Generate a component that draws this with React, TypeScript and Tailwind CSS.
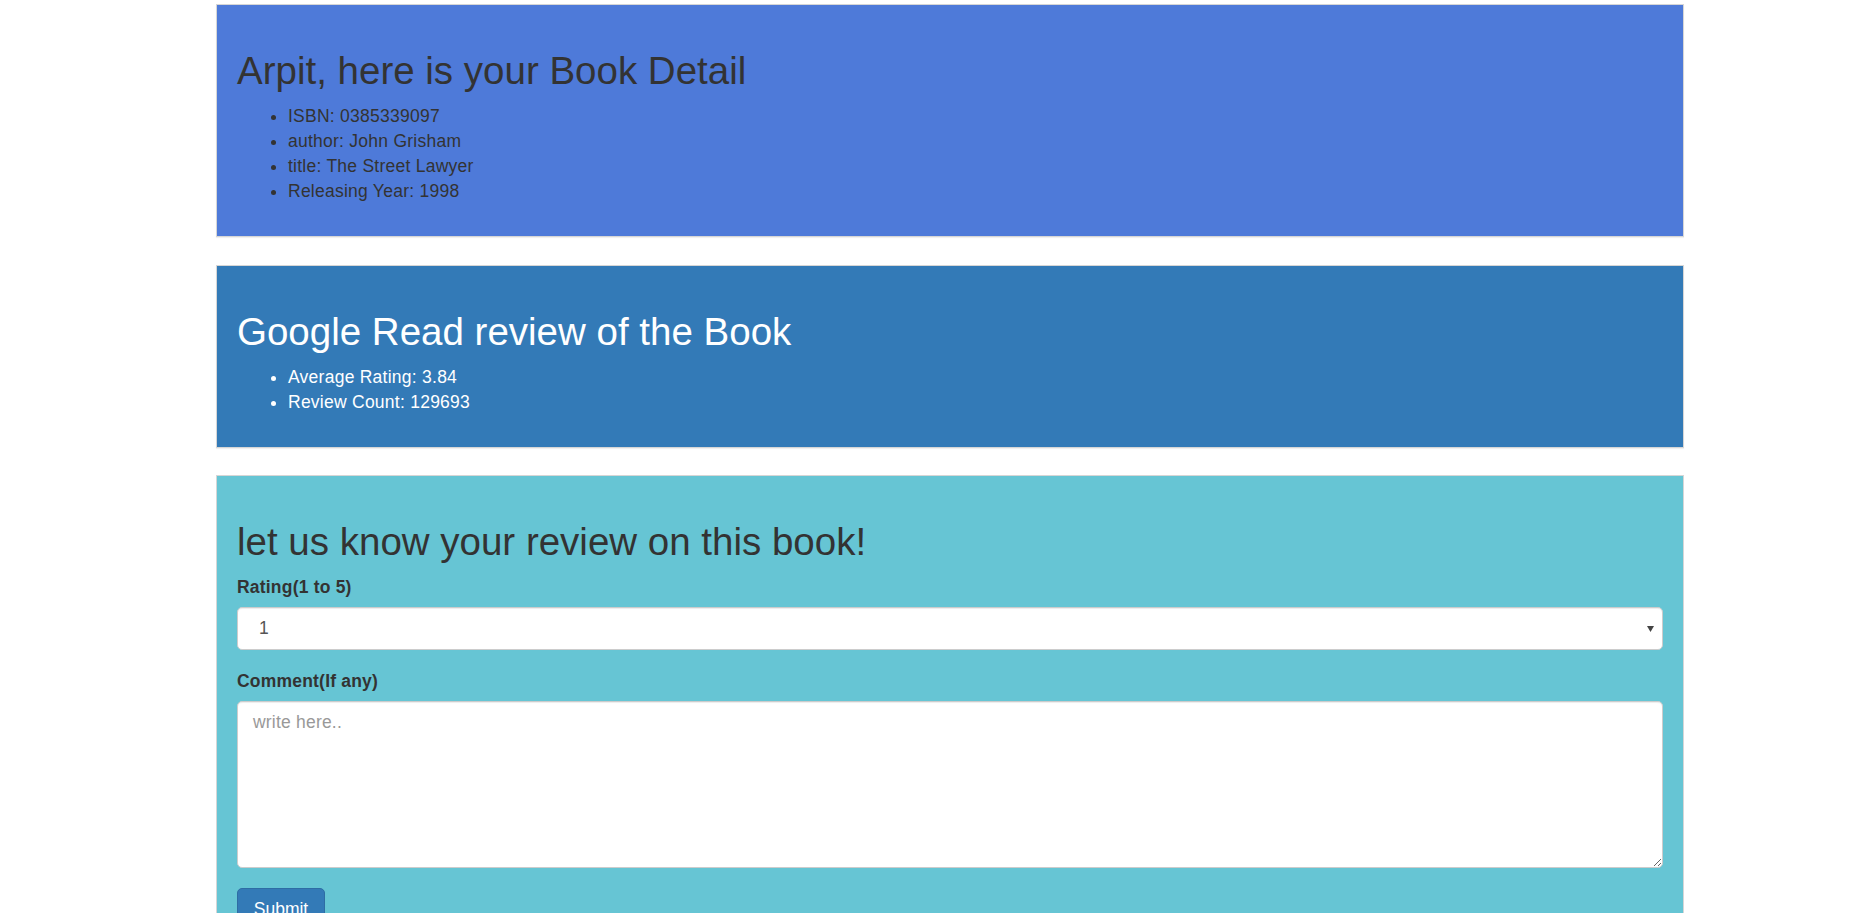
import { useState } from "react";

const bookDetails = [
  "ISBN: 0385339097",
  "author: John Grisham",
  "title: The Street Lawyer",
  "Releasing Year: 1998",
];

const googleReview = ["Average Rating: 3.84", "Review Count: 129693"];

export default function App() {
  const [rating, setRating] = useState("1");
  const [comment, setComment] = useState("");

  return (
    <div className="h-[913px] overflow-hidden bg-white font-['Liberation_Sans',Arial,sans-serif] text-[#333]">
      <div className="ml-[216px] w-[1468px] pt-[4px] flex flex-col gap-[28px]">
        {/* book detail */}
        <section className="border border-[#d6d6d6] bg-[#4e7ad9] px-[20px] pt-[45px] pb-[32px] shadow-[0_1px_1px_rgba(0,0,0,0.06)]">
          <h2 className="text-[38.5px] leading-[42px] mb-[12px]">Arpit, here is your Book Detail</h2>
          <ul className="list-disc pl-[51px] text-[17.5px] leading-[25px] tracking-[0.25px]">
            {bookDetails.map((item) => (
              <li key={item}>{item}</li>
            ))}
          </ul>
        </section>

        {/* google review */}
        <section className="border border-[#d6d6d6] bg-[#337ab7] text-white px-[20px] pt-[45px] pb-[32px] shadow-[0_1px_1px_rgba(0,0,0,0.06)]">
          <h2 className="text-[38.5px] leading-[42px] mb-[12px]">Google Read review of the Book</h2>
          <ul className="list-disc pl-[51px] text-[17.5px] leading-[25px] tracking-[0.25px]">
            {googleReview.map((item) => (
              <li key={item}>{item}</li>
            ))}
          </ul>
        </section>

        {/* review form */}
        <section className="-mt-[1px] border border-[#d6d6d6] bg-[#66c5d4] px-[20px] pt-[45px] pb-[40px]">
          <h2 className="text-[38.5px] leading-[42px] mb-[12px]">let us know your review on this book!</h2>
          <form onSubmit={(e) => e.preventDefault()}>
            <div className="mb-[19px]">
              <label className="block font-bold text-[17.5px] leading-[25px] tracking-[0.2px] mb-[7px]">
                Rating(1 to 5)
              </label>
              <div className="relative">
                <select
                  value={rating}
                  onChange={(e) => setRating(e.target.value)}
                  className="block w-full h-[43px] appearance-none bg-white border border-[#ccc] rounded-[5px] pl-[21px] pr-[30px] text-[17.5px] text-[#555] shadow-[inset_0_1px_1px_rgba(0,0,0,0.075)] outline-none"
                >
                  {["1", "2", "3", "4", "5"].map((v) => (
                    <option key={v} value={v}>
                      {v}
                    </option>
                  ))}
                </select>
                <svg
                  className="absolute right-[9px] top-[19px] pointer-events-none"
                  width="7"
                  height="6"
                  viewBox="0 0 7 6"
                >
                  <path d="M0 0h7L3.5 6z" fill="#444" />
                </svg>
              </div>
            </div>

            <div className="mb-[20px]">
              <label className="block font-bold text-[17.5px] leading-[25px] tracking-[0.2px] mb-[7px]">
                Comment(If any)
              </label>
              <textarea
                value={comment}
                onChange={(e) => setComment(e.target.value)}
                placeholder="write here.."
                className="block w-full h-[167px] bg-white border border-[#ccc] rounded-[5px] px-[15px] py-[7.5px] text-[17.5px] leading-[25px] tracking-[0.2px] text-[#555] placeholder:text-[#999] shadow-[inset_0_1px_1px_rgba(0,0,0,0.075)] outline-none resize-y"
              />
            </div>

            <button
              type="submit"
              className="w-[88px] h-[42px] bg-[#337ab7] border border-[#2e6da4] rounded-[5px] text-white text-[17.5px] leading-[25px]"
            >
              Submit
            </button>
          </form>
        </section>
      </div>
    </div>
  );
}
